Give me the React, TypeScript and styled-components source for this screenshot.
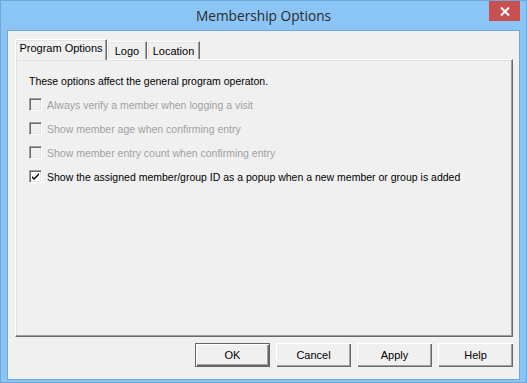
import React from "react";
import styled, { createGlobalStyle } from "styled-components";

const Global = createGlobalStyle`
  html, body { margin: 0; padding: 0; background: #8bc5f5; }
  #root { width: 527px; height: 383px; }
`;

const Win = styled.div`
  box-sizing: border-box;
  width: 527px;
  height: 383px;
  background: #8bc5f5;
  border: 1px solid #6ea7d8;
  display: flex;
  flex-direction: column;
  font-family: "Liberation Sans", Arial, sans-serif;
`;

const TitleBar = styled.div`
  height: 29px;
  display: flex;
  align-items: center;
  justify-content: center;
  position: relative;
`;

const Title = styled.div`
  font-family: "Open Sans", "Noto Sans", sans-serif;
  font-size: 13.7px;
  color: #2a2a2a;
  margin-top: 0px;
`;

const CloseBtn = styled.div`
  position: absolute;
  right: 6px;
  top: 0;
  width: 31px;
  height: 20px;
  background: #c75050;
  display: flex;
  align-items: center;
  justify-content: center;
`;

const Client = styled.div`
  box-sizing: border-box;
  margin: 0 6px 2px 6px;
  flex: 1;
  border: 1px solid #6ea7d8;
  background: #f0f0f0;
  padding: 8px 6px 0 7px;
  display: flex;
  flex-direction: column;
  font-size: 10.5px;
  color: #000;
`;

const TabRow = styled.div`
  display: flex;
  align-items: flex-end;
  height: 20px;
  position: relative;
  z-index: 1;
`;

const Tab = styled.div<{ $active?: boolean; $w: number }>`
  box-sizing: border-box;
  width: ${(p) => p.$w}px;
  height: ${(p) => (p.$active ? 21 : 18)}px;
  margin-bottom: ${(p) => (p.$active ? -1 : 0)}px;
  background: #f0f0f0;
  border-top: 1px solid #ffffff;
  border-left: 1px solid #ffffff;
  border-right: 1px solid #696969;
  box-shadow: inset -1px 0 0 #a0a0a0, inset 1px 1px 0 #e3e3e3;
  display: flex;
  justify-content: center;
  padding-top: ${(p) => (p.$active ? 2 : 3)}px;
  white-space: nowrap;
  font-size: 11px;
`;

const Panel = styled.div`
  box-sizing: border-box;
  width: 498px;
  height: 278px;
  border-top: 1px solid #ffffff;
  border-left: 1px solid #ffffff;
  border-right: 1px solid #696969;
  border-bottom: 1px solid #696969;
  box-shadow: inset -1px -1px 0 #a0a0a0, inset 1px 1px 0 #e3e3e3;
  padding: 14px 0 0 13px;
  display: flex;
  flex-direction: column;
`;

const Intro = styled.div`
  height: 15px;
  line-height: 15px;
  margin-bottom: 9px;
`;

const Row = styled.div<{ $disabled?: boolean }>`
  display: flex;
  align-items: center;
  height: 13px;
  margin-bottom: 11px;
  color: ${(p) => (p.$disabled ? "#a0a0a0" : "#000")};
`;

const Box = styled.div<{ $disabled?: boolean }>`
  box-sizing: border-box;
  width: 13px;
  height: 13px;
  margin-right: 5px;
  border-top: 1px solid #a0a0a0;
  border-left: 1px solid #a0a0a0;
  border-right: 1px solid #ffffff;
  border-bottom: 1px solid #ffffff;
  box-shadow: inset 1px 1px 0 #696969, inset -1px -1px 0 #e3e3e3;
  background: ${(p) => (p.$disabled ? "#f0f0f0" : "#ffffff")};
  display: flex;
  align-items: center;
  justify-content: center;
`;

const Buttons = styled.div`
  display: flex;
  justify-content: flex-end;
  gap: 6px;
  width: 498px;
  margin-top: 6px;
`;

const Btn = styled.div<{ $default?: boolean }>`
  box-sizing: border-box;
  width: 75px;
  height: 24px;
  background: #f0f0f0;
  border: ${(p) => (p.$default ? "1px solid #646464" : "none")};
  display: flex;
  align-items: center;
  justify-content: center;
  font-size: 11px;
  box-shadow: inset 1px 1px 0 #fff, inset -1px -1px 0 #696969, inset -2px -2px 0 #a0a0a0;
`;

export default function App() {
  return (
    <>
      <Global />
      <Win>
        <TitleBar>
          <Title>Membership Options</Title>
          <CloseBtn>
            <svg width="10" height="9" viewBox="0 0 10 9">
              <path d="M1 0.5 L9 8.5 M9 0.5 L1 8.5" stroke="#fff" strokeWidth="2" />
            </svg>
          </CloseBtn>
        </TitleBar>
        <Client>
          <TabRow>
            <Tab $active $w={92}>Program Options</Tab>
            <Tab $w={40}>Logo</Tab>
            <Tab $w={53}>Location</Tab>
          </TabRow>
          <Panel>
            <Intro>These options affect the general program operaton.</Intro>
            <Row $disabled>
              <Box $disabled />
              Always verify a member when logging a visit
            </Row>
            <Row $disabled>
              <Box $disabled />
              Show member age when confirming entry
            </Row>
            <Row $disabled>
              <Box $disabled />
              Show member entry count when confirming entry
            </Row>
            <Row>
              <Box>
                <svg width="7" height="7" viewBox="0 0 7 7">
                  <path d="M0 3 L2 5 L7 0 L7 2 L2 7 L0 5 Z" fill="#000" />
                </svg>
              </Box>
              Show the assigned member/group ID as a popup when a new member or group is added
            </Row>
          </Panel>
          <Buttons>
            <Btn $default>OK</Btn>
            <Btn>Cancel</Btn>
            <Btn>Apply</Btn>
            <Btn>Help</Btn>
          </Buttons>
        </Client>
      </Win>
    </>
  );
}
